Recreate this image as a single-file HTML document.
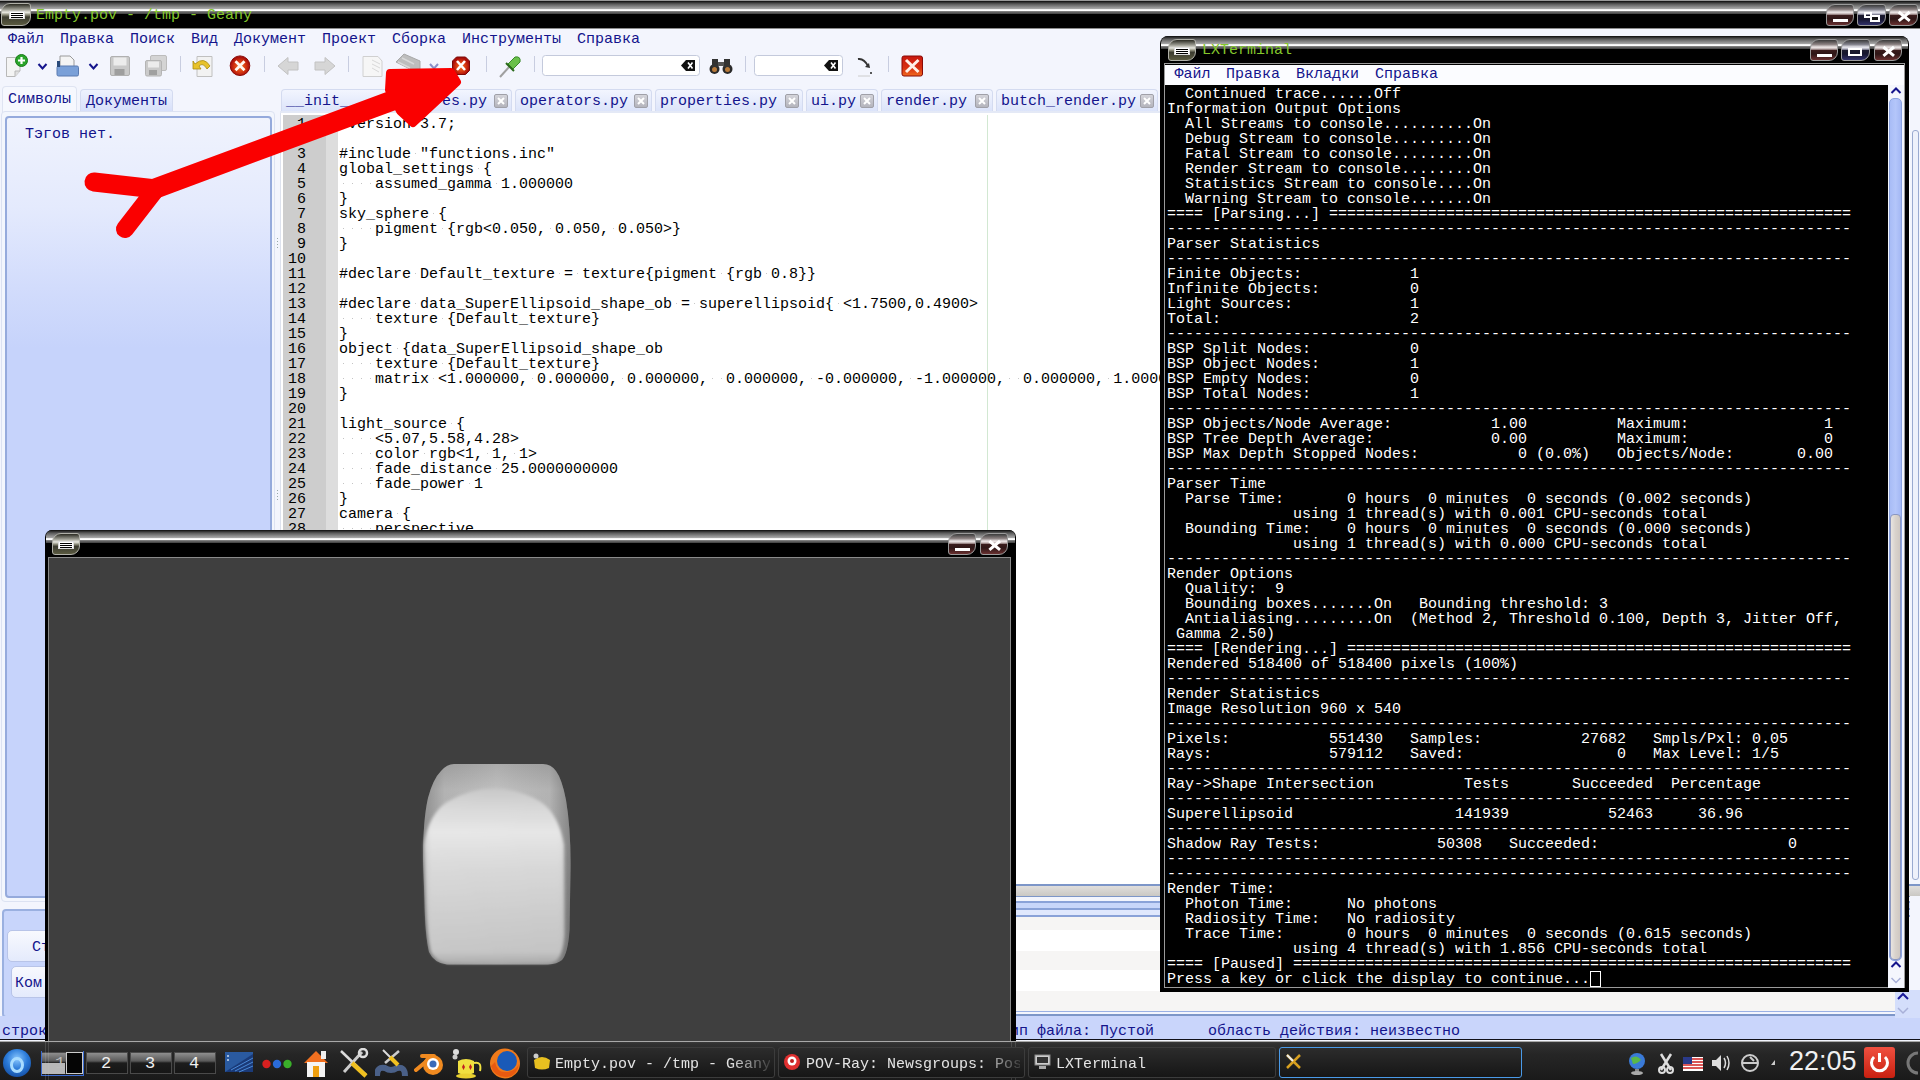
<!DOCTYPE html><html><head><meta charset="utf-8"><style>
*{margin:0;padding:0;box-sizing:border-box}
html,body{width:1920px;height:1080px;overflow:hidden;background:#000;position:relative;font-family:"Liberation Sans",sans-serif}
.a{position:absolute}
.m{position:absolute;font-family:"Liberation Mono",monospace;font-size:15px;line-height:15px;white-space:pre}
pre{font-family:"Liberation Mono",monospace;white-space:pre;margin:0}
.glass{background:linear-gradient(to bottom,#0a0a0a 0px,#262626 1px,#5a5a5a 3px,#8c8c8c 6px,#a8a8a8 7.8px,#f0f0f0 8.4px,#ffffff 9.6px,#8a8a8a 10.2px,#6a6a6a 11px,#4a4a4a 12.5px,#000 13px,#000 100%)}
.wb{position:absolute;border:1px solid #9a9a9a;border-radius:9px 3px 9px 3px;overflow:hidden}
.wb.r{background:linear-gradient(to bottom,#3a3a3a 0%,#8a8080 22%,#f0eaea 36%,#b8a8a8 46%,#3a1c1c 52%,#2e1616 70%,#6a3030 100%)}
.wb.b{background:linear-gradient(to bottom,#3a3a3a 0%,#80808a 22%,#eaeaf0 36%,#a8a8b8 46%,#1a1a2e 52%,#16162e 70%,#30306a 100%)}
.ib{position:absolute;border:1px solid #b0b0a8;border-radius:9px 3px 9px 3px;background:linear-gradient(to bottom,#2a2a22 0%,#9a9a90 25%,#e8e8e0 40%,#8a8a78 52%,#3c3c30 62%,#5a5a40 100%)}
.ib i{position:absolute;left:7px;top:7px;width:16px;height:8px;background:#fff;border:1px solid #ddd}
.ib i:before{content:"";position:absolute;left:1px;right:1px;top:1px;height:1px;background:#000;box-shadow:0 2px 0 #000,0 4px 0 #000}
</style></head><body>
<div class="a" style="left:0;top:29px;width:1920px;height:1012px;background:#f3f5fd"></div>
<div class="a glass" style="left:0;top:0;width:1920px;height:28px;border-top:1px solid #9a9a9a"></div>
<div class="a" style="left:0;top:28px;width:1920px;height:1px;background:#8c8c8c"></div>
<div class="ib" style="left:1px;top:3px;width:30px;height:23px"><i></i></div>
<div class="m" style="left:36px;top:7.699999999999999px;color:#84c82c;">Empty.pov - /tmp - Geany</div>
<div class="wb r" style="left:1826px;top:4px;width:28px;height:22px"><div class="a" style="left:6px;top:14px;width:15px;height:3px;background:#fff"></div></div>
<div class="wb b" style="left:1857px;top:4px;width:29px;height:22px"><div class="a" style="left:6px;top:7px;width:8px;height:6px;border:2px solid #fff"></div><div class="a" style="left:12px;top:10px;width:10px;height:7px;border:2px solid #fff;background:#111"></div></div>
<div class="wb r" style="left:1889px;top:4px;width:29px;height:22px"><svg class="a" style="left:0;top:0" width="29" height="22"><path d="M8.7 7.0 L19.7 15.8 M19.7 7.0 L8.7 15.8" stroke="#fff" stroke-width="3"/></svg></div>
<div class="m" style="left:8px;top:32.3px;color:#14148c;">Файл</div>
<div class="m" style="left:60px;top:32.3px;color:#14148c;">Правка</div>
<div class="m" style="left:130px;top:32.3px;color:#14148c;">Поиск</div>
<div class="m" style="left:191px;top:32.3px;color:#14148c;">Вид</div>
<div class="m" style="left:234px;top:32.3px;color:#14148c;">Документ</div>
<div class="m" style="left:322px;top:32.3px;color:#14148c;">Проект</div>
<div class="m" style="left:392px;top:32.3px;color:#14148c;">Сборка</div>
<div class="m" style="left:462px;top:32.3px;color:#14148c;">Инструменты</div>
<div class="m" style="left:577px;top:32.3px;color:#14148c;">Справка</div>
<svg class="a" style="left:0;top:0" width="940" height="82"><path d="M6.5 57.5 H20 V71 L15 76.5 H6.5 Z" fill="#f4f4f4" stroke="#b8b8b8"/><path d="M15 76.5 L15 71 H20" fill="#e0e0e0" stroke="#b8b8b8"/><circle cx="21.5" cy="60.5" r="6" fill="#2aa52a" stroke="#1a7a1a"/><path d="M21.5 57 V64 M18 60.5 H25" stroke="#fff" stroke-width="2.2"/><path d="M38.5 64 L42.5 68.5 L46.5 64" fill="none" stroke="#14148c" stroke-width="2"/><path d="M60 56 H70 L74 60 V70 H60 Z" fill="#f4f4f4" stroke="#9a9a9a"/><rect x="57" y="66" width="21.5" height="10" rx="1.5" fill="#7aa0d8" stroke="#5a7ab0"/><rect x="57" y="61" width="3" height="6" fill="#2a4a7a"/><path d="M89.5 64 L93.5 68.5 L97.5 64" fill="none" stroke="#14148c" stroke-width="2"/><rect x="110.5" y="56.5" width="19" height="19" rx="1.5" fill="#c9c9c9" stroke="#b0b0b0"/><rect x="113.5" y="57.5" width="13" height="8" fill="#ececec"/><rect x="114.5" y="69" width="10" height="6" fill="#9e9e9e"/><rect x="150.5" y="55.5" width="16" height="15" rx="1.5" fill="#d4d4d4" stroke="#bcbcbc"/><rect x="145.5" y="60.5" width="16" height="15.5" rx="1.5" fill="#cacaca" stroke="#b4b4b4"/><rect x="148" y="61.5" width="11" height="6" fill="#ececec"/><rect x="149" y="70" width="8" height="5" fill="#a0a0a0"/><rect x="180" y="56" width="1" height="16" fill="#c8cde0"/><path d="M197 56.5 H212 V76.5 H197 Z" fill="#f2f2f2" stroke="#c0c0c0"/><path d="M195 64 Q204 56 210 66 L207 69 Q203 62 199 66 L201 69 H193 V61 Z" fill="#e8c22a" stroke="#a88a10" stroke-width="0.8"/><defs><radialGradient id="rg1" cx="0.5" cy="0.55" r="0.5"><stop offset="0" stop-color="#f07a20"/><stop offset="0.55" stop-color="#d83a10"/><stop offset="1" stop-color="#a80c08"/></radialGradient><linearGradient id="qg" x1="0" y1="0" x2="0" y2="1"><stop offset="0" stop-color="#c81810"/><stop offset="0.6" stop-color="#d83010"/><stop offset="1" stop-color="#f06a20"/></linearGradient></defs><circle cx="240" cy="65.7" r="9.8" fill="url(#rg1)" stroke="#8a0a06"/><path d="M235.5 61.2 L244.5 70.2 M244.5 61.2 L235.5 70.2" stroke="#fff8f0" stroke-width="2.8"/><rect x="264" y="56" width="1" height="16" fill="#c8cde0"/><path d="M278 66 L288 57.5 V62 H298 V70 H288 V74.5 Z" fill="#d6d6d6" stroke="#c2c2c2"/><path d="M335 66 L325 57.5 V62 H315 V70 H325 V74.5 Z" fill="#d6d6d6" stroke="#c2c2c2"/><rect x="348" y="56" width="1" height="16" fill="#c8cde0"/><path d="M363 56.5 H378 L382 61 V76.5 H363 Z" fill="#f6f6f6" stroke="#d0d0d0"/><path d="M372 60 L380 64 M372 64 L380 68 M372 68 L379 72" stroke="#d8d8d8"/><path d="M396 62 L404 54 L420 61 L420 69 L410 69 Z" fill="#bdbdbd" stroke="#a8a8a8"/><path d="M398 62 L410 68 M402 58 L414 64" stroke="#d8d8d8" stroke-width="1.5"/><path d="M430 64 L434 68.5 L438 64" fill="none" stroke="#8a90c8" stroke-width="2"/><path d="M456.5 57 H465.5 L469.5 61 V70.5 L465.5 74.5 H456.5 L452.5 70.5 V61 Z" fill="url(#rg1)" stroke="#7a0a06"/><path d="M457 61 L465 70 M465 61 L457 70" stroke="#fff" stroke-width="2.6"/><rect x="486" y="56" width="1" height="16" fill="#c8cde0"/><path d="M500 77 L510 66" stroke="#a0a0a0" stroke-width="2"/><path d="M508 64 L513 69 L520 62 Q521 56 515 57 Z" fill="#6ac04a" stroke="#3a8a2a"/><path d="M506 63 L514 71" stroke="#2a6a1a" stroke-width="2"/><rect x="534" y="56" width="1" height="16" fill="#c8cde0"/><rect x="542.5" y="55.5" width="157" height="20" rx="3" fill="#fff" stroke="#c4cadc"/><path d="M681 65.5 L686 60 H695 V71 H686 Z" fill="#111"/><path d="M688 62.5 L692.5 68.5 M692.5 62.5 L688 68.5" stroke="#fff" stroke-width="1.6"/><circle cx="714.5" cy="69" r="5" fill="#2a2a2a"/><circle cx="727.5" cy="69" r="5" fill="#2a2a2a"/><circle cx="714.5" cy="69.5" r="2.5" fill="#b87a3a"/><circle cx="727.5" cy="69.5" r="2.5" fill="#b87a3a"/><rect x="712" y="59" width="6" height="8" fill="#333"/><rect x="724" y="59" width="6" height="8" fill="#333"/><rect x="718" y="62" width="6" height="4" fill="#555"/><rect x="745" y="56" width="1" height="16" fill="#c8cde0"/><rect x="754.5" y="55.5" width="88" height="20" rx="3" fill="#fff" stroke="#c4cadc"/><path d="M824 65.5 L829 60 H838 V71 H829 Z" fill="#111"/><path d="M831 62.5 L835.5 68.5 M835.5 62.5 L831 68.5" stroke="#fff" stroke-width="1.6"/><path d="M858 59 Q864 58 868 66" fill="none" stroke="#333" stroke-width="2"/><path d="M865 67 L870 68 L869 63 Z" fill="#333"/><circle cx="871" cy="73" r="1" fill="#222"/><path d="M858 76 H870" stroke="#ccc"/><rect x="888" y="56" width="1" height="16" fill="#c8cde0"/><rect x="902" y="56" width="20.5" height="20" rx="2" fill="url(#qg)" stroke="#8a0a06"/><path d="M906 60 L918.5 72 M918.5 60 L906 72" stroke="#fff0e8" stroke-width="3"/></svg>
<div class="a" style="left:2px;top:86px;width:75px;height:27px;background:#f6f8fe;border:1px solid #dfe4f2;border-bottom:none;border-radius:4px 4px 0 0"></div>
<div class="m" style="left:8px;top:91.8px;color:#14148c;">Символы</div>
<div class="a" style="left:80px;top:89px;width:93px;height:23px;background:linear-gradient(#eef2fd,#d6dffa);border:1px solid #d4dbf0;border-bottom:none;border-radius:4px 4px 0 0"></div>
<div class="m" style="left:86px;top:93.5px;color:#14148c;">Документы</div>
<div class="a" style="left:1px;top:111px;width:274px;height:791px;background:#f3f6fd;border:1px solid #dce2f2;border-radius:4px"></div>
<div class="a" style="left:5px;top:116px;width:267px;height:782px;background:linear-gradient(to bottom,#f0f3fd 0px,#e4eafd 90px,#d2dcfc 170px,#c6d3fb 230px,#c6d3fb 100%);border:2px solid #95aadc;border-radius:4px"></div>
<div class="m" style="left:25px;top:127.25px;color:#14148c;">Тэгов нет.</div>
<div class="a" style="left:277px;top:238px;width:1px;height:12px;background:repeating-linear-gradient(#9aa 0 1px,transparent 1px 3px)"></div>
<div class="a" style="left:277px;top:490px;width:1px;height:12px;background:repeating-linear-gradient(#9aa 0 1px,transparent 1px 3px)"></div>
<div class="a" style="left:280px;top:112px;width:1630px;height:774px;background:#fff;border-left:1px solid #dde2ee"></div>
<div class="a" style="left:283px;top:115px;width:43px;height:770px;background:#cdcdcd"></div>
<div class="a" style="left:326px;top:115px;width:12px;height:770px;background:#dddddd"></div>
<div class="a" style="left:987px;top:115px;width:1px;height:770px;background:#d2e8d2"></div>
<pre class="m" style="left:288px;top:117px;color:#000"> 1
 2
 3
 4
 5
 6
 7
 8
 9
10
11
12
13
14
15
16
17
18
19
20
21
22
23
24
25
26
27
28</pre>
<svg class="a" style="left:0;top:0" width="1160" height="560"><rect x="415" y="123" width="1" height="1" fill="#c8c8c8"/><rect x="415" y="153" width="1" height="1" fill="#c8c8c8"/><rect x="478" y="168" width="1" height="1" fill="#c8c8c8"/><rect x="343" y="183" width="1" height="1" fill="#c4c4c4"/><rect x="352" y="183" width="1" height="1" fill="#c4c4c4"/><rect x="361" y="183" width="1" height="1" fill="#c4c4c4"/><rect x="370" y="183" width="1" height="1" fill="#c4c4c4"/><rect x="496" y="183" width="1" height="1" fill="#c8c8c8"/><rect x="433" y="213" width="1" height="1" fill="#c8c8c8"/><rect x="343" y="228" width="1" height="1" fill="#c4c4c4"/><rect x="352" y="228" width="1" height="1" fill="#c4c4c4"/><rect x="361" y="228" width="1" height="1" fill="#c4c4c4"/><rect x="370" y="228" width="1" height="1" fill="#c4c4c4"/><rect x="442" y="228" width="1" height="1" fill="#c8c8c8"/><rect x="550" y="228" width="1" height="1" fill="#c8c8c8"/><rect x="613" y="228" width="1" height="1" fill="#c8c8c8"/><rect x="415" y="273" width="1" height="1" fill="#c8c8c8"/><rect x="559" y="273" width="1" height="1" fill="#c8c8c8"/><rect x="577" y="273" width="1" height="1" fill="#c8c8c8"/><rect x="721" y="273" width="1" height="1" fill="#c8c8c8"/><rect x="766" y="273" width="1" height="1" fill="#c8c8c8"/><rect x="415" y="303" width="1" height="1" fill="#c8c8c8"/><rect x="676" y="303" width="1" height="1" fill="#c8c8c8"/><rect x="694" y="303" width="1" height="1" fill="#c8c8c8"/><rect x="838" y="303" width="1" height="1" fill="#c8c8c8"/><rect x="343" y="318" width="1" height="1" fill="#c4c4c4"/><rect x="352" y="318" width="1" height="1" fill="#c4c4c4"/><rect x="361" y="318" width="1" height="1" fill="#c4c4c4"/><rect x="370" y="318" width="1" height="1" fill="#c4c4c4"/><rect x="442" y="318" width="1" height="1" fill="#c8c8c8"/><rect x="397" y="348" width="1" height="1" fill="#c8c8c8"/><rect x="343" y="363" width="1" height="1" fill="#c4c4c4"/><rect x="352" y="363" width="1" height="1" fill="#c4c4c4"/><rect x="361" y="363" width="1" height="1" fill="#c4c4c4"/><rect x="370" y="363" width="1" height="1" fill="#c4c4c4"/><rect x="442" y="363" width="1" height="1" fill="#c8c8c8"/><rect x="343" y="378" width="1" height="1" fill="#c4c4c4"/><rect x="352" y="378" width="1" height="1" fill="#c4c4c4"/><rect x="361" y="378" width="1" height="1" fill="#c4c4c4"/><rect x="370" y="378" width="1" height="1" fill="#c4c4c4"/><rect x="433" y="378" width="1" height="1" fill="#c8c8c8"/><rect x="532" y="378" width="1" height="1" fill="#c8c8c8"/><rect x="622" y="378" width="1" height="1" fill="#c8c8c8"/><rect x="712" y="378" width="1" height="1" fill="#c8c8c8"/><rect x="721" y="378" width="1" height="1" fill="#c8c8c8"/><rect x="811" y="378" width="1" height="1" fill="#c8c8c8"/><rect x="910" y="378" width="1" height="1" fill="#c8c8c8"/><rect x="1009" y="378" width="1" height="1" fill="#c8c8c8"/><rect x="1018" y="378" width="1" height="1" fill="#c8c8c8"/><rect x="1108" y="378" width="1" height="1" fill="#c8c8c8"/><rect x="1198" y="378" width="1" height="1" fill="#c8c8c8"/><rect x="1288" y="378" width="1" height="1" fill="#c8c8c8"/><rect x="1297" y="378" width="1" height="1" fill="#c8c8c8"/><rect x="1387" y="378" width="1" height="1" fill="#c8c8c8"/><rect x="1477" y="378" width="1" height="1" fill="#c8c8c8"/><rect x="451" y="423" width="1" height="1" fill="#c8c8c8"/><rect x="343" y="438" width="1" height="1" fill="#c4c4c4"/><rect x="352" y="438" width="1" height="1" fill="#c4c4c4"/><rect x="361" y="438" width="1" height="1" fill="#c4c4c4"/><rect x="370" y="438" width="1" height="1" fill="#c4c4c4"/><rect x="343" y="453" width="1" height="1" fill="#c4c4c4"/><rect x="352" y="453" width="1" height="1" fill="#c4c4c4"/><rect x="361" y="453" width="1" height="1" fill="#c4c4c4"/><rect x="370" y="453" width="1" height="1" fill="#c4c4c4"/><rect x="424" y="453" width="1" height="1" fill="#c8c8c8"/><rect x="487" y="453" width="1" height="1" fill="#c8c8c8"/><rect x="514" y="453" width="1" height="1" fill="#c8c8c8"/><rect x="343" y="468" width="1" height="1" fill="#c4c4c4"/><rect x="352" y="468" width="1" height="1" fill="#c4c4c4"/><rect x="361" y="468" width="1" height="1" fill="#c4c4c4"/><rect x="370" y="468" width="1" height="1" fill="#c4c4c4"/><rect x="496" y="468" width="1" height="1" fill="#c8c8c8"/><rect x="343" y="483" width="1" height="1" fill="#c4c4c4"/><rect x="352" y="483" width="1" height="1" fill="#c4c4c4"/><rect x="361" y="483" width="1" height="1" fill="#c4c4c4"/><rect x="370" y="483" width="1" height="1" fill="#c4c4c4"/><rect x="469" y="483" width="1" height="1" fill="#c8c8c8"/><rect x="397" y="513" width="1" height="1" fill="#c8c8c8"/><rect x="343" y="528" width="1" height="1" fill="#c4c4c4"/><rect x="352" y="528" width="1" height="1" fill="#c4c4c4"/><rect x="361" y="528" width="1" height="1" fill="#c4c4c4"/><rect x="370" y="528" width="1" height="1" fill="#c4c4c4"/></svg>
<pre class="m" style="left:339px;top:117px;color:#000">#version 3.7;

#include &quot;functions.inc&quot;
global_settings {
    assumed_gamma 1.000000
}
sky_sphere {
    pigment {rgb&lt;0.050, 0.050, 0.050&gt;}
}

#declare Default_texture = texture{pigment {rgb 0.8}}

#declare data_SuperEllipsoid_shape_ob = superellipsoid{ &lt;1.7500,0.4900&gt;
    texture {Default_texture}
}
object {data_SuperEllipsoid_shape_ob
    texture {Default_texture}
    matrix &lt;1.000000, 0.000000, 0.000000,  0.000000, -0.000000, -1.000000,  0.000000, 1.000000, 0.000000,  0.000000, 0.000000, 0.000000&gt;
}

light_source {
    &lt;5.07,5.58,4.28&gt;
    color rgb&lt;1, 1, 1&gt;
    fade_distance 25.0000000000
    fade_power 1
}
camera {
    perspective</pre>
<div class="a" style="left:281px;top:89px;width:231px;height:23px;background:linear-gradient(#f2f5fe,#dbe3fa);border:1px solid #d4dbf0;border-bottom:none;border-radius:4px 4px 0 0"></div>
<div class="m" style="left:286px;top:94.0px;color:#14148c;">__init__</div>
<div class="m" style="left:442px;top:94.0px;color:#14148c;">es.py</div>
<div class="a" style="left:494px;top:94px;width:14px;height:14px;background:linear-gradient(#d4d4da,#b4b4bc);border:1px solid #a0a0a8;border-radius:2px"><svg class="a" style="left:0;top:0" width="12" height="12"><path d="M3 3 L9 9 M9 3 L3 9" stroke="#fff" stroke-width="2"/></svg></div>
<div class="a" style="left:515px;top:89px;width:137px;height:23px;background:linear-gradient(#f2f5fe,#dbe3fa);border:1px solid #d4dbf0;border-bottom:none;border-radius:4px 4px 0 0"></div>
<div class="m" style="left:520px;top:94.0px;color:#14148c;">operators.py</div>
<div class="a" style="left:634px;top:94px;width:14px;height:14px;background:linear-gradient(#d4d4da,#b4b4bc);border:1px solid #a0a0a8;border-radius:2px"><svg class="a" style="left:0;top:0" width="12" height="12"><path d="M3 3 L9 9 M9 3 L3 9" stroke="#fff" stroke-width="2"/></svg></div>
<div class="a" style="left:655px;top:89px;width:148px;height:23px;background:linear-gradient(#f2f5fe,#dbe3fa);border:1px solid #d4dbf0;border-bottom:none;border-radius:4px 4px 0 0"></div>
<div class="m" style="left:660px;top:94.0px;color:#14148c;">properties.py</div>
<div class="a" style="left:785px;top:94px;width:14px;height:14px;background:linear-gradient(#d4d4da,#b4b4bc);border:1px solid #a0a0a8;border-radius:2px"><svg class="a" style="left:0;top:0" width="12" height="12"><path d="M3 3 L9 9 M9 3 L3 9" stroke="#fff" stroke-width="2"/></svg></div>
<div class="a" style="left:806px;top:89px;width:72px;height:23px;background:linear-gradient(#f2f5fe,#dbe3fa);border:1px solid #d4dbf0;border-bottom:none;border-radius:4px 4px 0 0"></div>
<div class="m" style="left:811px;top:94.0px;color:#14148c;">ui.py</div>
<div class="a" style="left:860px;top:94px;width:14px;height:14px;background:linear-gradient(#d4d4da,#b4b4bc);border:1px solid #a0a0a8;border-radius:2px"><svg class="a" style="left:0;top:0" width="12" height="12"><path d="M3 3 L9 9 M9 3 L3 9" stroke="#fff" stroke-width="2"/></svg></div>
<div class="a" style="left:881px;top:89px;width:112px;height:23px;background:linear-gradient(#f2f5fe,#dbe3fa);border:1px solid #d4dbf0;border-bottom:none;border-radius:4px 4px 0 0"></div>
<div class="m" style="left:886px;top:94.0px;color:#14148c;">render.py</div>
<div class="a" style="left:975px;top:94px;width:14px;height:14px;background:linear-gradient(#d4d4da,#b4b4bc);border:1px solid #a0a0a8;border-radius:2px"><svg class="a" style="left:0;top:0" width="12" height="12"><path d="M3 3 L9 9 M9 3 L3 9" stroke="#fff" stroke-width="2"/></svg></div>
<div class="a" style="left:996px;top:89px;width:162px;height:23px;background:linear-gradient(#f2f5fe,#dbe3fa);border:1px solid #d4dbf0;border-bottom:none;border-radius:4px 4px 0 0"></div>
<div class="m" style="left:1001px;top:94.0px;color:#14148c;">butch_render.py</div>
<div class="a" style="left:1140px;top:94px;width:14px;height:14px;background:linear-gradient(#d4d4da,#b4b4bc);border:1px solid #a0a0a8;border-radius:2px"><svg class="a" style="left:0;top:0" width="12" height="12"><path d="M3 3 L9 9 M9 3 L3 9" stroke="#fff" stroke-width="2"/></svg></div>
<div class="a" style="left:1161px;top:89px;width:139px;height:23px;background:linear-gradient(#f2f5fe,#dbe3fa);border:1px solid #d4dbf0;border-bottom:none;border-radius:4px 4px 0 0"></div>
<div class="m" style="left:1166px;top:94.0px;color:#14148c;">x.py</div>
<div class="a" style="left:1282px;top:94px;width:14px;height:14px;background:linear-gradient(#d4d4da,#b4b4bc);border:1px solid #a0a0a8;border-radius:2px"><svg class="a" style="left:0;top:0" width="12" height="12"><path d="M3 3 L9 9 M9 3 L3 9" stroke="#fff" stroke-width="2"/></svg></div>
<div class="a" style="left:280px;top:111px;width:1630px;height:2px;background:#e4e9f6"></div>
<div class="a" style="left:280px;top:884px;width:1640px;height:2px;background:#7d96c8"></div>
<div class="a" style="left:280px;top:886px;width:1640px;height:10px;background:linear-gradient(#e0dedc,#cac8c4)"></div>
<div class="a" style="left:1px;top:903px;width:279px;height:113px;background:#f3f5fd"></div>
<div class="a" style="left:1015px;top:896px;width:895px;height:1px;background:#7d96c8"></div>
<div class="a" style="left:1015px;top:901px;width:895px;height:2px;background:#8aa2d8"></div>
<div class="a" style="left:1015px;top:903px;width:895px;height:5px;background:#c8d6fa"></div>
<div class="a" style="left:1015px;top:908px;width:895px;height:2px;background:#8aa2d8"></div>
<div class="a" style="left:1015px;top:910px;width:895px;height:5px;background:#e0e8fd"></div>
<div class="a" style="left:1015px;top:915px;width:895px;height:2px;background:#8aa2d8"></div>
<div class="a" style="left:1015px;top:917px;width:880px;height:13px;background:#f6f5f4"></div>
<div class="a" style="left:1015px;top:930px;width:880px;height:21px;background:#ffffff"></div>
<div class="a" style="left:1015px;top:951px;width:880px;height:19px;background:#f6f5f4"></div>
<div class="a" style="left:1015px;top:970px;width:880px;height:21px;background:#ffffff"></div>
<div class="a" style="left:1015px;top:991px;width:880px;height:20px;background:#f6f5f4"></div>
<div class="a" style="left:1015px;top:1011px;width:895px;height:1px;background:#9ab0e4"></div>
<div class="a" style="left:1015px;top:1014px;width:895px;height:2px;background:#7d96c8"></div>
<div class="a" style="left:2px;top:909px;width:60px;height:109px;border:2px solid #9ab0e0;border-radius:4px;background:#c8d5fb"></div>
<div class="a" style="left:7px;top:930px;width:60px;height:32px;border:1px solid #b8c4e8;border-radius:5px;background:linear-gradient(#f8f9fe,#e4eafc)"></div>
<div class="m" style="left:32px;top:939.5px;color:#14148c;">Статус</div>
<div class="a" style="left:11px;top:966px;width:60px;height:32px;border:1px solid #b8c4e8;border-radius:5px;background:linear-gradient(#f8f9fe,#e4eafc)"></div>
<div class="m" style="left:15px;top:975.5px;color:#14148c;">Ком</div>
<div class="a" style="left:0;top:1016px;width:1920px;height:24px;background:#c9d5fb;border-bottom:1px solid #101018"></div>
<div class="m" style="left:2px;top:1024.0px;color:#14148c;">строк</div>
<div class="m" style="left:1001px;top:1023.5px;color:#14148c;">Тип файла: Пустой      область действия: неизвестно</div>
<div class="a" style="left:1909px;top:112px;width:11px;height:772px;background:#f3f5fd;border-left:1px solid #fff"></div>
<div class="a" style="left:1912px;top:130px;width:7px;height:750px;border:1px solid #9aaad0;border-radius:3px;background:#eef1fb"></div>
<div class="a" style="left:1895px;top:990px;width:25px;height:28px;background:#d4defb"></div>
<svg class="a" style="left:1895px;top:990px" width="25" height="28"><path d="M3 9 L8 4 L13 9" fill="none" stroke="#1a1a9a" stroke-width="2"/><path d="M3 18 L8 23 L13 18" fill="none" stroke="#a8b0d8" stroke-width="1.5"/></svg>
<div class="a" style="left:1160px;top:36px;width:749px;height:956px;background:#000;border-radius:8px 8px 0 0"></div>
<div class="a glass" style="left:1161px;top:36px;width:747px;height:27px;border-radius:7px 7px 0 0"></div>
<div class="a" style="left:1164px;top:63px;width:741px;height:925px;border:1px solid #9a9a9a"></div>
<div class="ib" style="left:1168px;top:39px;width:28px;height:22px"><i style="left:5px"></i></div>
<div class="m" style="left:1202px;top:42.5px;color:#84c82c;">LXTerminal</div>
<div class="wb r" style="left:1810px;top:39px;width:28px;height:22px"><div class="a" style="left:6px;top:14px;width:15px;height:3px;background:#fff"></div></div>
<div class="wb b" style="left:1841px;top:39px;width:29px;height:22px"><div class="a" style="left:6px;top:8px;width:14px;height:8px;border:2px solid #fff"></div></div>
<div class="wb r" style="left:1874px;top:39px;width:28px;height:22px"><svg class="a" style="left:0;top:0" width="28" height="22"><path d="M8.4 7.0 L19.0 15.8 M19.0 7.0 L8.4 15.8" stroke="#fff" stroke-width="3"/></svg></div>
<div class="a" style="left:1165px;top:65px;width:739px;height:20px;background:#fbfcff"></div>
<div class="m" style="left:1174.5px;top:67.25px;color:#14148c;">Файл</div>
<div class="m" style="left:1226px;top:67.25px;color:#14148c;">Правка</div>
<div class="m" style="left:1296px;top:67.25px;color:#14148c;">Вкладки</div>
<div class="m" style="left:1375px;top:67.25px;color:#14148c;">Справка</div>
<pre class="m" style="left:1167px;top:86.7px;color:#fff">  Continued trace......Off
Information Output Options
  All Streams to console..........On
  Debug Stream to console.........On
  Fatal Stream to console.........On
  Render Stream to console........On
  Statistics Stream to console....On
  Warning Stream to console.......On
==== [Parsing...] ==========================================================
----------------------------------------------------------------------------
Parser Statistics
----------------------------------------------------------------------------
Finite Objects:            1
Infinite Objects:          0
Light Sources:             1
Total:                     2
----------------------------------------------------------------------------
BSP Split Nodes:           0
BSP Object Nodes:          1
BSP Empty Nodes:           0
BSP Total Nodes:           1
----------------------------------------------------------------------------
BSP Objects/Node Average:           1.00          Maximum:               1
BSP Tree Depth Average:             0.00          Maximum:               0
BSP Max Depth Stopped Nodes:           0 (0.0%)   Objects/Node:       0.00
----------------------------------------------------------------------------
Parser Time
  Parse Time:       0 hours  0 minutes  0 seconds (0.002 seconds)
              using 1 thread(s) with 0.001 CPU-seconds total
  Bounding Time:    0 hours  0 minutes  0 seconds (0.000 seconds)
              using 1 thread(s) with 0.000 CPU-seconds total
----------------------------------------------------------------------------
Render Options
  Quality:  9
  Bounding boxes.......On   Bounding threshold: 3
  Antialiasing.........On  (Method 2, Threshold 0.100, Depth 3, Jitter Off,
 Gamma 2.50)
==== [Rendering...] ========================================================
Rendered 518400 of 518400 pixels (100%)
----------------------------------------------------------------------------
Render Statistics
Image Resolution 960 x 540
----------------------------------------------------------------------------
Pixels:           551430   Samples:           27682   Smpls/Pxl: 0.05
Rays:             579112   Saved:                 0   Max Level: 1/5
----------------------------------------------------------------------------
Ray-&gt;Shape Intersection          Tests       Succeeded  Percentage
----------------------------------------------------------------------------
Superellipsoid                  141939           52463     36.96
----------------------------------------------------------------------------
Shadow Ray Tests:             50308   Succeeded:                     0
----------------------------------------------------------------------------
----------------------------------------------------------------------------
Render Time:
  Photon Time:      No photons
  Radiosity Time:   No radiosity
  Trace Time:       0 hours  0 minutes  0 seconds (0.615 seconds)
              using 4 thread(s) with 1.856 CPU-seconds total
==== [Paused] ==============================================================
Press a key or click the display to continue...</pre>
<div class="a" style="left:1590px;top:971px;width:11px;height:16px;border:1px solid #fff"></div>
<div class="a" style="left:1888px;top:85px;width:16px;height:903px;background:#f4f6fd"></div>
<svg class="a" style="left:1888px;top:85px" width="16" height="903"><path d="M3.5 8 L8 3.5 L12.5 8" fill="none" stroke="#14148c" stroke-width="2"/><path d="M3.5 882 L8 877.5 L12.5 882" fill="none" stroke="#14148c" stroke-width="2"/><path d="M3.5 893 L8 897.5 L12.5 893" fill="none" stroke="#a8b0d8" stroke-width="1.5"/></svg>
<div class="a" style="left:1889px;top:98px;width:13px;height:863px;background:linear-gradient(to right,#a8bcf6,#b4c6fa 50%,#a4b8f4);border:1px solid #8aa2e0;border-radius:5px"></div>
<div class="a" style="left:1890px;top:514px;width:11px;height:446px;background:linear-gradient(to right,#e8e4e0,#d8d2cc 50%,#cfc8c2);border:1px solid #8a96c0;border-radius:4px"></div>
<div class="a" style="left:45px;top:530px;width:971px;height:511px;background:#000;border-radius:7px 7px 0 0"></div>
<div class="a glass" style="left:46px;top:530px;width:969px;height:27px;border-radius:6px 6px 0 0"></div>
<div class="a" style="left:48px;top:557px;width:963px;height:484px;background:#3f3f3f;border:1px solid #8a8a8a;border-bottom:none"></div>
<div class="ib" style="left:52px;top:533px;width:28px;height:22px"><i style="left:5px"></i></div>
<div class="wb r" style="left:948px;top:533px;width:28px;height:22px"><div class="a" style="left:6px;top:14px;width:15px;height:3px;background:#fff"></div></div>
<div class="wb r" style="left:980px;top:533px;width:28px;height:22px"><svg class="a" style="left:0;top:0" width="28" height="22"><path d="M8.4 7.0 L19.0 15.8 M19.0 7.0 L8.4 15.8" stroke="#fff" stroke-width="3"/></svg></div>
<svg class="a" style="left:400px;top:740px" width="200" height="240" viewBox="400 740 200 240">
<defs>
<linearGradient id="sg1" x1="0" y1="764" x2="0" y2="964" gradientUnits="userSpaceOnUse"><stop offset="0" stop-color="#a6a6a6"/><stop offset="0.13" stop-color="#bcbcbc"/><stop offset="0.4" stop-color="#b8b8b8"/><stop offset="1" stop-color="#9a9a9a"/></linearGradient>
<linearGradient id="sg1h" x1="422" y1="0" x2="572" y2="0" gradientUnits="userSpaceOnUse"><stop offset="0" stop-color="#000" stop-opacity="0.25"/><stop offset="0.15" stop-color="#000" stop-opacity="0.05"/><stop offset="0.5" stop-color="#fff" stop-opacity="0.06"/><stop offset="0.85" stop-color="#000" stop-opacity="0.05"/><stop offset="1" stop-color="#000" stop-opacity="0.3"/></linearGradient>
<linearGradient id="sg2" x1="0" y1="788" x2="0" y2="964" gradientUnits="userSpaceOnUse"><stop offset="0" stop-color="#c6c6c6"/><stop offset="0.12" stop-color="#d8d8d8"/><stop offset="0.25" stop-color="#e6e6e6"/><stop offset="0.45" stop-color="#d8d8d8"/><stop offset="0.7" stop-color="#cdcdcd"/><stop offset="0.93" stop-color="#c4c4c4"/><stop offset="1" stop-color="#a8a8a8"/></linearGradient>
<linearGradient id="sg3" x1="423" y1="0" x2="565" y2="0" gradientUnits="userSpaceOnUse"><stop offset="0" stop-color="#000" stop-opacity="0.12"/><stop offset="0.06" stop-color="#fff" stop-opacity="0.05"/><stop offset="0.94" stop-color="#fff" stop-opacity="0"/><stop offset="1" stop-color="#000" stop-opacity="0.06"/></linearGradient>
<filter id="sb" x="-10%" y="-10%" width="120%" height="120%"><feGaussianBlur stdDeviation="0.45"/></filter>
<filter id="sb2" x="-10%" y="-10%" width="120%" height="120%"><feGaussianBlur stdDeviation="1.6"/></filter>
</defs>
<g filter="url(#sb)">
<path d="M454 764 L543 764 Q551 764 556 771 Q562 779 566 800 Q571 830 570.5 870 L569.5 930 Q568 953 562 960 Q557 964 548 964.5 L447 964.5 Q434 963 429 952 Q425 935 424.5 900 L423 860 Q423 820 428 798 Q433 779 441 771 Q447 764 454 764 Z" fill="url(#sg1)"/>
<path d="M454 764 L543 764 Q551 764 556 771 Q562 779 566 800 Q571 830 570.5 870 L569.5 930 Q568 953 562 960 Q557 964 548 964.5 L447 964.5 Q434 963 429 952 Q425 935 424.5 900 L423 860 Q423 820 428 798 Q433 779 441 771 Q447 764 454 764 Z" fill="url(#sg1h)"/>
</g>
<g filter="url(#sb2)">
<path d="M424 845 Q428 815 447 802 Q468 789 494 788.5 Q520 789 541 802 Q559 815 564 845 L564.5 935 Q563 955 556 961 Q551 963.5 545 963.5 L449 963.5 Q436 962 431 952 Q427 935 426 905 Z" fill="url(#sg2)"/>
<path d="M424 845 Q428 815 447 802 Q468 789 494 788.5 Q520 789 541 802 Q559 815 564 845 L564.5 935 Q563 955 556 961 Q551 963.5 545 963.5 L449 963.5 Q436 962 431 952 Q427 935 426 905 Z" fill="url(#sg3)"/>
</g>
</svg>
<div class="a" style="left:0;top:1041px;width:1920px;height:39px;background:linear-gradient(#3a3a3a 0px,#303030 2px,#262626 12px,#1a1a1a 100%);border-top:1px solid #a8a8a8"></div>
<div class="a" style="left:3px;top:1049px;width:28px;height:28px;border-radius:50%;background:radial-gradient(circle at 50% 35%,#8ac8ff 0,#2a7ad8 45%,#0a3a8a 100%)"></div>
<div class="a" style="left:10px;top:1057px;width:14px;height:16px;border:3px solid #a8dcff;border-radius:50%"></div>
<div class="a" style="left:41px;top:1052px;width:42px;height:22px;background:linear-gradient(#8e8e8e 0%,#5a5a5a 40%,#1c1c1c 50%,#161616 100%);border:1px solid #4a4a4a"></div>
<div class="a" style="left:86px;top:1052px;width:42px;height:22px;background:linear-gradient(#8e8e8e 0%,#5a5a5a 40%,#1c1c1c 50%,#161616 100%);border:1px solid #4a4a4a"></div>
<div class="m" style="left:101px;top:1055.5px;color:#f0f0f0;font-size:17px">2</div>
<div class="a" style="left:130px;top:1052px;width:42px;height:22px;background:linear-gradient(#8e8e8e 0%,#5a5a5a 40%,#1c1c1c 50%,#161616 100%);border:1px solid #4a4a4a"></div>
<div class="m" style="left:145px;top:1055.5px;color:#f0f0f0;font-size:17px">3</div>
<div class="a" style="left:174px;top:1052px;width:42px;height:22px;background:linear-gradient(#8e8e8e 0%,#5a5a5a 40%,#1c1c1c 50%,#161616 100%);border:1px solid #4a4a4a"></div>
<div class="m" style="left:189px;top:1055.5px;color:#f0f0f0;font-size:17px">4</div>
<div class="a" style="left:42px;top:1063px;width:23px;height:11px;background:#b8b8b8"></div>
<div class="a" style="left:66px;top:1052px;width:17px;height:22px;background:#050505;border:1px solid #ccc"></div>
<div class="a" style="left:41px;top:1051px;width:43px;height:25px;border:1px solid #3a6ad0;border-top:none"></div>
<div class="m" style="left:55px;top:1055.5px;color:#bbb;font-size:17px">1</div>
<svg class="a" style="left:225px;top:1052px" width="30" height="22"><rect x="0" y="0" width="28" height="20" fill="#2a5aa0"/><path d="M0 20 L28 2 V20 Z" fill="#1a3a78"/><path d="M6 18 L28 6 M10 19 L28 10 M14 20 L28 14" stroke="#4a8ad8" stroke-width="1"/><circle cx="3" cy="4" r="1" fill="#cde"/><circle cx="3" cy="8" r="1" fill="#cde"/></svg>
<svg class="a" style="left:260px;top:1056px" width="40" height="16"><circle cx="6.5" cy="8" r="4.2" fill="#d82020"/><circle cx="17" cy="8" r="4.2" fill="#2a6ad8"/><circle cx="27.5" cy="8" r="4.2" fill="#3ab02a"/></svg>
<svg class="a" style="left:302px;top:1048px" width="28" height="30"><path d="M2 15 L14 3 L26 15 Z" fill="#f07020"/><rect x="19" y="3" width="5" height="8" fill="#eee"/><rect x="5" y="14" width="18" height="15" fill="#f4f4f4"/><rect x="11" y="18" width="6" height="11" fill="#f0a010"/></svg>
<svg class="a" style="left:338px;top:1048px" width="32" height="30"><path d="M3 3 L28 27" stroke="#ddd" stroke-width="2.5"/><path d="M24 4 L6 24" stroke="#ccc" stroke-width="3"/><circle cx="25" cy="5" r="4" fill="none" stroke="#ddd" stroke-width="2.5"/><path d="M14 15 L28 28" stroke="#f0c020" stroke-width="4.5"/></svg>
<svg class="a" style="left:375px;top:1048px" width="33" height="30"><path d="M2 28 Q2 18 10 20 Q16 24 22 20 Q30 18 30 28" fill="none" stroke="#4a6088" stroke-width="6"/><path d="M8 2 L22 16" stroke="#ddd" stroke-width="2"/><path d="M24 3 L10 15" stroke="#ccc" stroke-width="2.5"/><path d="M15 9 L23 17" stroke="#f0c020" stroke-width="4"/></svg>
<svg class="a" style="left:414px;top:1048px" width="31" height="30"><path d="M2 22 L14 12 M8 8 L20 8" stroke="#f08a20" stroke-width="4" stroke-linecap="round"/><circle cx="19" cy="17" r="10" fill="#f08a20"/><circle cx="19" cy="16" r="6" fill="#fff"/><circle cx="19" cy="16" r="3.5" fill="#3a6ab8"/></svg>
<svg class="a" style="left:450px;top:1047px" width="34" height="32"><circle cx="6" cy="5" r="3" fill="#ddd"/><circle cx="5" cy="10" r="2.5" fill="#ccc"/><path d="M8 14 Q16 10 24 14 L24 26 Q16 30 8 26 Z" fill="#f0e040"/><path d="M24 16 Q32 14 30 24" fill="none" stroke="#f0e040" stroke-width="2"/><ellipse cx="16" cy="29" rx="10" ry="2.5" fill="#e8d030"/><path d="M12 20 L13.5 17 L15 20 L13.5 23 Z M19 20 L20.5 17 L22 20 L20.5 23 Z" fill="#c02020"/></svg>
<svg class="a" style="left:489px;top:1048px" width="32" height="31"><circle cx="16" cy="15.5" r="15" fill="#f07a1a"/><circle cx="18" cy="13" r="10" fill="#1a5ab8"/><path d="M2 18 Q6 30 18 29 Q28 28 30 16 Q26 24 16 24 Q8 24 6 14 Z" fill="#e85a10"/></svg>
<div class="a" style="left:45px;top:1042px;width:1px;height:38px;background:rgba(200,200,200,0.18)"></div>
<div class="a" style="left:48px;top:1042px;width:1px;height:38px;background:rgba(200,200,200,0.18)"></div>
<div class="a" style="left:1011px;top:1042px;width:1px;height:38px;background:rgba(200,200,200,0.18)"></div>
<div class="a" style="left:1015px;top:1042px;width:1px;height:38px;background:rgba(200,200,200,0.18)"></div>
<div class="a" style="left:527px;top:1047px;width:248px;height:31px;background:linear-gradient(#2c2c2c,#161616);border:1px solid #3c3c3c;border-radius:3px"></div>
<div class="a" style="left:555px;top:1048px;width:215px;height:29px;overflow:hidden;-webkit-mask-image:linear-gradient(to right,#000 0,#000 calc(100% - 40px),rgba(0,0,0,0.15) 100%)">
<div class="m" style="left:0px;top:9.0px;color:#e4e4e4">Empty.pov - /tmp - Geany</div></div>
<div class="a" style="left:778px;top:1047px;width:247px;height:31px;background:linear-gradient(#2c2c2c,#161616);border:1px solid #3c3c3c;border-radius:3px"></div>
<div class="a" style="left:806px;top:1048px;width:214px;height:29px;overflow:hidden;-webkit-mask-image:linear-gradient(to right,#000 0,#000 calc(100% - 40px),rgba(0,0,0,0.15) 100%)">
<div class="m" style="left:0px;top:9.0px;color:#e4e4e4">POV-Ray: Newsgroups: Pos</div></div>
<div class="a" style="left:1028px;top:1047px;width:248px;height:31px;background:linear-gradient(#2c2c2c,#161616);border:1px solid #3c3c3c;border-radius:3px"></div>
<div class="a" style="left:1056px;top:1048px;width:215px;height:29px;overflow:hidden;-webkit-mask-image:linear-gradient(to right,#000 0,#000 calc(100% - 40px),rgba(0,0,0,0.15) 100%)">
<div class="m" style="left:0px;top:9.0px;color:#e4e4e4">LXTerminal</div></div>
<div class="a" style="left:1279px;top:1047px;width:243px;height:31px;background:linear-gradient(#2c2c2c,#161616);border:1px solid #4a9ae8;border-radius:3px"></div>
<div class="a" style="left:1307px;top:1048px;width:210px;height:29px;overflow:hidden;-webkit-mask-image:linear-gradient(to right,#000 0,#000 calc(100% - 40px),rgba(0,0,0,0.15) 100%)">
<div class="m" style="left:0px;top:9.0px;color:#e4e4e4"></div></div>
<svg class="a" style="left:531px;top:1052px" width="22" height="20"><path d="M3 8 Q11 2 19 8 L18 16 Q11 19 4 16 Z" fill="#e8c020"/><circle cx="5" cy="4" r="2.5" fill="#ccc"/></svg>
<svg class="a" style="left:782px;top:1052px" width="20" height="20"><circle cx="10" cy="10" r="8" fill="#e03030"/><circle cx="10" cy="9" r="4.5" fill="#fff"/><circle cx="10" cy="9" r="2" fill="#c02020"/></svg>
<svg class="a" style="left:1033px;top:1053px" width="20" height="18"><rect x="2" y="2" width="15" height="10" fill="#ccc" stroke="#888"/><rect x="4" y="4" width="11" height="6" fill="#333"/><rect x="6" y="13" width="7" height="3" fill="#aaa"/></svg>
<svg class="a" style="left:1284px;top:1052px" width="20" height="20"><path d="M3 3 L16 16 M16 3 L3 16" stroke="#d8a020" stroke-width="2.5"/><path d="M3 3 L9 9" stroke="#eee" stroke-width="2"/></svg>
<svg class="a" style="left:1625px;top:1048px" width="150" height="30"><circle cx="12" cy="13" r="8" fill="#3a7ad8"/><path d="M6 10 Q12 6 16 12 Q12 16 8 16 Z" fill="#5ab84a"/><rect x="10" y="21" width="4" height="4" fill="#888"/><ellipse cx="12" cy="25" rx="6" ry="2" fill="#aaa"/><path d="M36 6 L46 22 M46 6 L36 22" stroke="#ddd" stroke-width="2.5"/><circle cx="37" cy="22" r="3" fill="none" stroke="#ddd" stroke-width="2"/><circle cx="45" cy="22" r="3" fill="none" stroke="#ddd" stroke-width="2"/><rect x="58" y="9" width="20" height="14" fill="#fff"/><path d="M58 11 H78 M58 14 H78 M58 17 H78 M58 20 H78" stroke="#d02020" stroke-width="1.5"/><rect x="58" y="9" width="9" height="7" fill="#2a3a8a"/><path d="M87 12 H91 L96 7 V23 L91 18 H87 Z" fill="#ddd"/><path d="M99 10 Q102 15 99 20 M102 8 Q106 15 102 22" fill="none" stroke="#ddd" stroke-width="1.5"/><circle cx="125" cy="15" r="8" fill="none" stroke="#ccc" stroke-width="2"/><path d="M117 15 H133 M125 9 L129 13" stroke="#ccc" stroke-width="2"/><path d="M146 17 L150 12 L154 17 Z" fill="#ccc"/></svg>
<div class="m" style="left:1789px;top:1046px;font-family:'Liberation Sans',sans-serif;font-size:27px;line-height:30px;color:#f0f0f0">22:05</div>
<div class="a" style="left:1864px;top:1047px;width:31px;height:31px;background:linear-gradient(#f05040,#c82010);border-radius:3px"></div>
<svg class="a" style="left:1864px;top:1047px" width="31" height="31"><path d="M10 10 A8 8 0 1 0 21 10" fill="none" stroke="#fff" stroke-width="3"/><path d="M15.5 6 V15" stroke="#fff" stroke-width="3"/></svg>
<svg class="a" style="left:1898px;top:1047px" width="22" height="31"><path d="M20 6 A10 10 0 1 0 20 26" fill="none" stroke="#777" stroke-width="3"/></svg>
<svg class="a" style="left:0;top:0" width="600" height="300" viewBox="0 0 600 300">
<g fill="none" stroke="#fa0000" stroke-linecap="round" stroke-linejoin="round">
<path d="M94 182 L156 189" stroke-width="19"/>
<path d="M156 189 L125 229" stroke-width="18"/>
<path d="M154 189 L410 94" stroke-width="20"/>
</g>
<path d="M390 73 L451 72 L457 82 L413 123 L400 111 L389 90 Z" fill="#fa0000" stroke="#fa0000" stroke-width="8" stroke-linejoin="round"/>
</svg>
</body></html>
